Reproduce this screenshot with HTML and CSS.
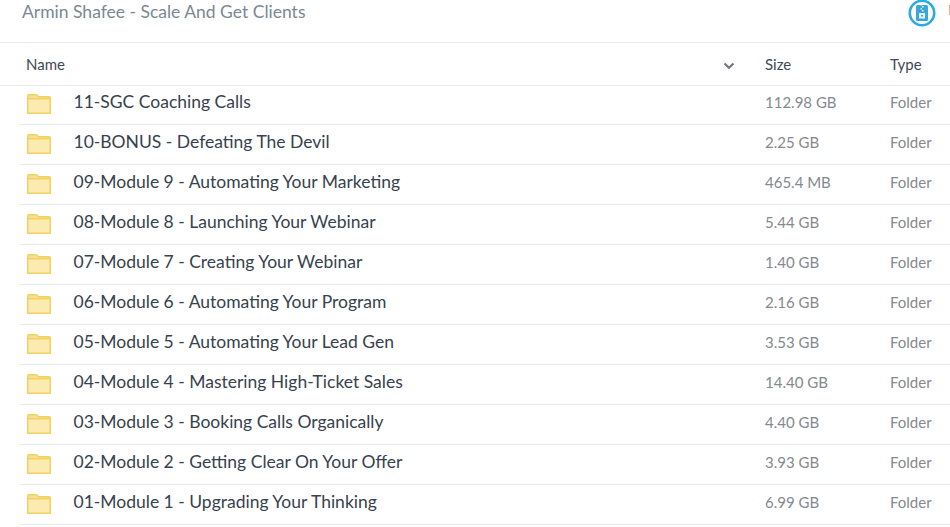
FILE: index.html
```html
<!DOCTYPE html>
<html lang="en">
<head>
    <meta charset="UTF-8">
    <title>Armin Shafee - Scale And Get Clients</title>
    <link rel="stylesheet" href="styles.css">
</head>
<body>
    <div class="top-bar">
        <div class="folder-title">Armin Shafee - Scale And Get Clients</div>
        <svg class="zip-icon" width="28" height="28" viewBox="0 0 28 28">
            <circle cx="14" cy="14" r="12.2" fill="#fff" stroke="#29abe2" stroke-width="2.6"/>
            <path d="M9.500 6h9a1.500 1.500 0 0 1 1.500 1.500v13a1.500 1.500 0 0 1-1.500 1.500h-9a1.500 1.500 0 0 1-1.500-1.500v-13a1.500 1.500 0 0 1 1.500-1.500z" fill="#3aa6dc"/>
            <path d="M12.500 5h1.500v1.500h-1.500zM14 7h1.500v1.500h-1.500zM12.500 9h1.500v1.500h-1.500zM14 11h1.500v1.500h-1.500z" fill="#e3f4fc"/>
            <path d="M11 14h6v5.500h-6z" fill="#e3f4fc"/>
            <path d="M13 16h2v1.500h-2z" fill="#3aa6dc"/>
        </svg>
        <div class="edge-mark"></div>
    </div>

    <div class="list-head">
        <div class="col-name">Name</div>
        <svg class="sort-arrow" width="12" height="8" viewBox="0 0 12 8">
            <path d="M1.500 1.500l4.500 4.200 4.500-4.200" fill="none" stroke="#6f7780" stroke-width="2.200"/>
        </svg>
        <div class="col-size">Size</div>
        <div class="col-type">Type</div>
    </div>

    <div class="rows" id="rows"></div>

    <template id="rowTemplate">
        <div class="row">
            <svg class="folder" width="24" height="20" viewBox="0 0 24 20">
                <path d="M.750 19.250v-17.500a1 1 0 0 1 1-1h7.500l2.500 2h10.500a1 1 0 0 1 1 1v15.500z" fill="#f9e08e" stroke="#f4d064" stroke-width="1.500"/>
                <path d="M.750 4.750h22.500v14.500h-22.500z" fill="#fcebb0" stroke="#f4d064" stroke-width="1.500"/>
            </svg>
            <div class="name"></div>
            <div class="size"></div>
            <div class="type">Folder</div>
        </div>
    </template>

    <script>
        const folders = [
            ["11-SGC Coaching Calls", "112.98 GB"],
            ["10-BONUS - Defeating The Devil", "2.25 GB"],
            ["09-Module 9 - Automating Your Marketing", "465.4 MB"],
            ["08-Module 8 - Launching Your Webinar", "5.44 GB"],
            ["07-Module 7 - Creating Your Webinar", "1.40 GB"],
            ["06-Module 6 - Automating Your Program", "2.16 GB"],
            ["05-Module 5 - Automating Your Lead Gen", "3.53 GB"],
            ["04-Module 4 - Mastering High-Ticket Sales", "14.40 GB"],
            ["03-Module 3 - Booking Calls Organically", "4.40 GB"],
            ["02-Module 2 - Getting Clear On Your Offer", "3.93 GB"],
            ["01-Module 1 - Upgrading Your Thinking", "6.99 GB"]
        ];

        const rows = document.getElementById("rows");
        const rowTemplate = document.getElementById("rowTemplate");

        folders.forEach(([name, size]) => {
            const row = rowTemplate.content.cloneNode(true);
            row.querySelector(".name").textContent = name;
            row.querySelector(".size").textContent = size;
            rows.appendChild(row);
        });
    </script>
</body>
</html>
```

FILE: styles.css
```css
html, body {
    height: 100%;
}

body {
    margin: 0;
    overflow: hidden;
    background: #fff;
    font-family: 'Lato', sans-serif;
}

.top-bar {
    display: flex;
    height: 42px;
    padding-left: 22px;
    border-bottom: 1px solid #eaeaea;
    overflow: hidden;
}

.folder-title {
    flex: 1;
    font-size: 17.5px;
    line-height: 23px;
    color: #7b8894;
}

.zip-icon {
    flex: none;
    margin: -1px 0 0;
}

.edge-mark {
    flex: none;
    width: 1px;
    height: 10px;
    margin: 5px 0 0 13px;
    background: #f0b070;
}

.list-head {
    display: flex;
    align-items: center;
    height: 42px;
    border-bottom: 1px solid #eaeaea;
    font-size: 15px;
    color: #3e4a56;
}

.col-name {
    flex: 1;
    padding-left: 26px;
}

.sort-arrow {
    flex: none;
    margin: 3px 30px 0 0;
}

.col-size {
    width: 125px;
}

.col-type {
    width: 60px;
}

.rows {
    margin-top: -1px;
}

.row {
    display: flex;
    align-items: center;
    height: 39px;
    margin-left: 20px;
    border-bottom: 1px solid #eaeaea;
}

.folder {
    flex: none;
    margin: 0 0 1px 7px;
}

.name {
    flex: 1;
    margin-bottom: 6px;
    padding-left: 22.5px;
    font-size: 17.5px;
    color: #37424e;
}

.size {
    width: 125px;
    margin-bottom: 6px;
    font-size: 15px;
    color: #84898f;
}

.type {
    width: 60px;
    margin-bottom: 6px;
    font-size: 15px;
    color: #84898f;
}
```
